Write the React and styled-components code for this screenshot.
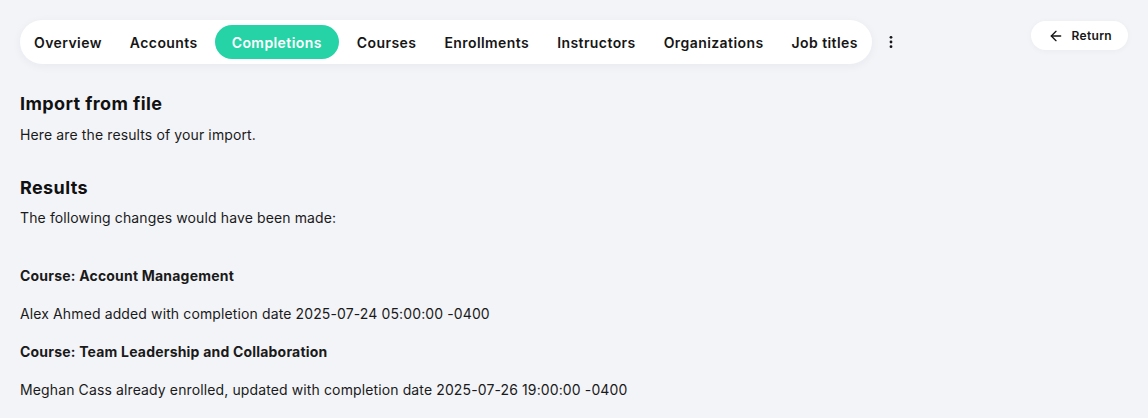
import React from "react";
import styled, { createGlobalStyle } from "styled-components";
import { ArrowLeft } from "lucide-react";

const GlobalStyle = createGlobalStyle`
  html, body {
    margin: 0;
    padding: 0;
    background: #f3f4f8;
  }
  body {
    font-family: Inter, "Open Sans", sans-serif;
    color: #161616;
    -webkit-font-smoothing: antialiased;
  }
`;

const Page = styled.div`
  padding: 20px 20px 0 20px;
  min-height: 398px;
  box-sizing: border-box;
`;

const Header = styled.header`
  display: flex;
  align-items: flex-start;
  justify-content: space-between;
`;

const NavGroup = styled.div`
  display: flex;
  align-items: center;
`;

const Nav = styled.nav`
  display: flex;
  align-items: center;
  height: 44px;
  padding: 0;
  background: #ffffff;
  border-radius: 22px;
  box-shadow: 0 2px 10px rgba(20, 30, 60, 0.05);
`;

const Tab = styled.a`
  display: flex;
  align-items: center;
  height: 34px;
  padding: 0 ${(p) => (p.$active ? "17px" : "14px")};
  margin: 0 ${(p) => (p.$active ? "4px 0 3px" : "0")};
  border-radius: 17px;
  background: ${(p) => (p.$active ? "#26d3a7" : "transparent")};
  color: ${(p) => (p.$active ? "#ffffff" : "#161616")};
  font-size: 14px;
  font-weight: 600;
  letter-spacing: 0.42px;
  white-space: nowrap;
  cursor: pointer;
`;

const MoreButton = styled.button`
  display: flex;
  align-items: center;
  justify-content: center;
  width: 24px;
  height: 24px;
  margin-left: 7px;
  padding: 0;
  border: none;
  background: transparent;
  color: #161616;
  cursor: pointer;
`;

const ReturnButton = styled.button`
  display: flex;
  align-items: center;
  gap: 8px;
  height: 29px;
  margin-top: 1px;
  padding: 0 16px 0 17px;
  border: none;
  border-radius: 15px;
  background: #ffffff;
  color: #161616;
  font-family: Inter, sans-serif;
  font-size: 12px;
  font-weight: 600;
  letter-spacing: 0.3px;
  box-shadow: 0 1px 6px rgba(20, 30, 60, 0.04);
  cursor: pointer;
`;

const Section = styled.section`
  margin-top: ${(p) => p.$top || "0"};
`;

const Heading = styled.h2`
  margin: 0;
  font-size: 18px;
  line-height: 27px;
  font-weight: 700;
  letter-spacing: 0.4px;
  color: #111111;
`;

const Text = styled.p`
  margin: ${(p) => p.$m || "0"};
  font-size: 14px;
  line-height: 21px;
  font-weight: ${(p) => (p.$bold ? 700 : 400)};
  letter-spacing: ${(p) => (p.$bold ? "0.2px" : "0.12px")};
  color: #1a1a1a;
`;

const tabs = [
  "Overview",
  "Accounts",
  "Completions",
  "Courses",
  "Enrollments",
  "Instructors",
  "Organizations",
  "Job titles",
];

const results = [
  {
    course: "Course: Account Management",
    line: "Alex Ahmed added with completion date 2025-07-24 05:00:00 -0400",
  },
  {
    course: "Course: Team Leadership and Collaboration",
    line: "Meghan Cass already enrolled, updated with completion date 2025-07-26 19:00:00 -0400",
  },
];

function Kebab() {
  return (
    <svg width="16" height="16" viewBox="0 0 16 16" fill="currentColor">
      <circle cx="8" cy="3.3" r="1.4" />
      <circle cx="8" cy="8" r="1.4" />
      <circle cx="8" cy="12.7" r="1.4" />
    </svg>
  );
}

export default function App() {
  return (
    <>
      <GlobalStyle />
      <Page>
        <Header>
          <NavGroup>
            <Nav>
              {tabs.map((t) => (
                <Tab key={t} $active={t === "Completions"}>
                  {t}
                </Tab>
              ))}
            </Nav>
            <MoreButton aria-label="More">
              <Kebab />
            </MoreButton>
          </NavGroup>
          <ReturnButton>
            <ArrowLeft size={16} strokeWidth={2} />
            Return
          </ReturnButton>
        </Header>

        <Section $top="26px">
          <Heading>Import from file</Heading>
          <Text $m="7px 0 0">Here are the results of your import.</Text>
        </Section>

        <Section $top="29px">
          <Heading>Results</Heading>
          <Text $m="6px 0 0">The following changes would have been made:</Text>
        </Section>

        <Section $top="37px">
          {results.map((r, i) => (
            <React.Fragment key={i}>
              <Text $bold $m={i === 0 ? "0" : "17px 0 0"}>
                {r.course}
              </Text>
              <Text $m="17px 0 0">{r.line}</Text>
            </React.Fragment>
          ))}
        </Section>
      </Page>
    </>
  );
}
